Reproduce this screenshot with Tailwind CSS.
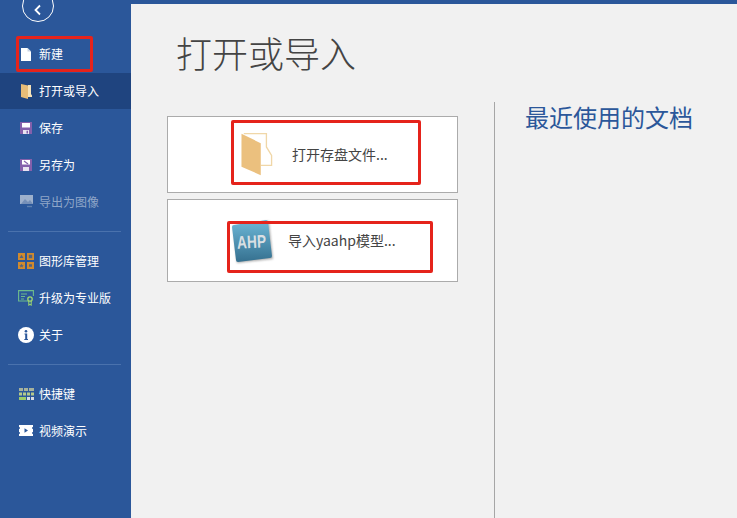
<!DOCTYPE html>
<html lang="zh">
<head>
<meta charset="utf-8">
<script src="https://cdn.jsdelivr.net/npm/@tailwindcss/browser@4"></script>
</head>
<body class="m-0 overflow-hidden">
<div class="relative flex h-[518px] w-[737px] overflow-hidden bg-[#2b579a] font-['Noto_Sans_CJK_SC','Liberation_Sans',sans-serif]">
  <!-- Sidebar -->
  <aside class="flex h-full w-[131px] shrink-0 flex-col text-[12px] text-white">
    <div class="-mt-[10px] ml-[22px] flex h-[32px] w-[32px] items-center justify-center rounded-full border border-white">
      <svg width="10" height="12" viewBox="0 0 10 12" class="mt-[8px]"><path d="M7 1.5 L2.5 6 L7 10.5" fill="none" stroke="white" stroke-width="1.8"/></svg>
    </div>
    <nav class="mt-[14px] flex flex-col">
      <div class="flex h-[37px] items-center gap-[5px] pl-[18px]">
        <span class="flex w-[16px] justify-center"><svg width="10" height="13" viewBox="0 0 10 13"><path d="M0 0H6.5L10 3.5V13H0Z" fill="#fff"/><path d="M6.5 0V3.5H10" fill="#c9d3e2"/></svg></span>
        <span class="-mt-[2px]">新建</span>
      </div>
      <div class="flex h-[36px] items-center gap-[5px] bg-[#1f447f] pl-[18px]">
        <span class="flex w-[16px] justify-center"><svg width="11" height="15" viewBox="0 0 11 15"><path d="M7 1H10V10L11 11.5V13H7Z" fill="#f6e2b8"/><path d="M0 0L7 1.5V15L0 13Z" fill="#e8bd78"/></svg></span>
        <span>打开或导入</span>
      </div>
      <div class="flex h-[37px] items-center gap-[5px] pl-[18px]">
        <span class="flex w-[16px] justify-center"><svg width="12" height="12" viewBox="0 0 12 12"><path d="M0 0H12V12H0Z" fill="#8460ab"/><path d="M2 1H10V5.5H2Z" fill="#fff"/><path d="M3 8H9V12H3Z" fill="#e8e3f0"/><path d="M6.5 8.7H8V11.5H6.5Z" fill="#8460ab"/></svg></span>
        <span>保存</span>
      </div>
      <div class="flex h-[37px] items-center gap-[5px] pl-[18px]">
        <span class="flex w-[16px] justify-center"><svg width="12" height="12" viewBox="0 0 12 12"><path d="M0 0H12V12H0Z" fill="#8460ab"/><path d="M2 1H10V5.5H2Z" fill="#fff"/><path d="M3 8H9V12H3Z" fill="#e8e3f0"/><path d="M4 2L8 5" stroke="#8460ab" stroke-width="1.2"/></svg></span>
        <span>另存为</span>
      </div>
      <div class="flex h-[37px] items-center gap-[5px] pl-[18px] text-[#8fa6c8]">
        <span class="flex w-[16px] justify-center"><svg width="13" height="13" viewBox="0 0 13 13"><path d="M0 0H13V9H0Z" fill="#9db0cc"/><path d="M1 9L5 4L8 7L10 5L13 9Z" fill="#7690b8"/><path d="M7 11.5H12" stroke="#5f80b0" stroke-width="1.4"/></svg></span>
        <span>导出为图像</span>
      </div>
    </nav>
    <div class="mx-[8px] mt-[11px] h-px w-[113px] bg-[#4a72ad]"></div>
    <nav class="mt-[10px] flex flex-col">
      <div class="flex h-[37px] items-center gap-[5px] pl-[18px]">
        <svg width="16" height="16" viewBox="0 0 16 16"><path d="M0 0H7V7H0ZM9 0H16V7H9ZM0 9H7V16H0ZM9 9H16V16H9Z" fill="#d08a2e"/><path d="M3.5 1.8L5.5 5H1.5ZM10.8 1.8H14.2V5.2H10.8ZM11 11.2H14V13.8H11Z" fill="#2b579a" opacity=".75"/><path d="M3.5 10.8L4.3 12.2H5.8L4.6 13.2L5 14.6L3.5 13.8L2 14.6L2.4 13.2L1.2 12.2H2.7Z" fill="#2b579a" opacity=".75"/></svg>
        <span>图形库管理</span>
      </div>
      <div class="flex h-[37px] items-center gap-[5px] pl-[18px]">
        <svg width="16" height="16" viewBox="0 0 16 16" fill="none"><path d="M10 11H.6V.6H15.4V6" stroke="#6dbb8c" stroke-width="1.1"/><path d="M3 4H9M3 6.5H7M3 9H6" stroke="#6dbb8c"/><circle cx="12" cy="9" r="2.2" stroke="#9fd86f" stroke-width="1.3"/><path d="M10.8 11V15.5L12 14L13.2 15.5V11" stroke="#9fd86f"/></svg>
        <span>升级为专业版</span>
      </div>
      <div class="flex h-[37px] items-center gap-[5px] pl-[18px]">
        <svg width="16" height="16" viewBox="0 0 16 16"><circle cx="8" cy="8" r="8" fill="#fff"/><circle cx="8" cy="4.2" r="1.3" fill="#2b579a"/><path d="M6.5 6.5H9.2V12H10V13H6.3V12H7.2V7.5H6.5Z" fill="#2b579a"/></svg>
        <span>关于</span>
      </div>
    </nav>
    <div class="mx-[8px] mt-[11px] h-px w-[113px] bg-[#4a72ad]"></div>
    <nav class="mt-[10px] flex flex-col">
      <div class="flex h-[37px] items-center gap-[5px] pl-[18px]">
        <span class="flex w-[16px] justify-center"><svg width="15" height="12" viewBox="0 0 15 12"><path d="M0 0H4V3H0ZM5 0H9V3H5ZM10 0H15V3H10Z" fill="#a7b29c"/><path d="M0 4.5H3V7.5H0ZM4 4.5H7V7.5H4ZM8 4.5H11V7.5H8ZM12 4.5H15V7.5H12Z" fill="#b4c98b"/><path d="M0 9H7V12H0Z" fill="#9ccb6a"/><path d="M8 9H11V12H8ZM12 9H15V12H12Z" fill="#d6dbe2"/></svg></span>
        <span>快捷键</span>
      </div>
      <div class="flex h-[37px] items-center gap-[5px] pl-[18px]">
        <span class="flex w-[16px] justify-center"><svg width="14" height="11" viewBox="0 0 14 11"><path d="M0 0H14V2L13 2.5V3.5L14 4V7L13 7.5V8.5L14 9V11H0V9L1 8.5V7.5L0 7V4L1 3.5V2.5L0 2Z" fill="#fff"/><path d="M5.5 3.2L9 5.5L5.5 7.8Z" fill="#2b579a"/></svg></span>
        <span>视频演示</span>
      </div>
    </nav>
  </aside>

  <!-- Main -->
  <main class="mt-[4px] flex min-w-0 flex-1 bg-[#f1f1f1]">
    <section class="w-[363px] shrink-0 pl-[36px]">
      <h1 class="ml-[9px] mt-[21px] text-[36px] leading-[54px] font-light text-[#444444]">打开或导入</h1>
      <div class="mt-[37px] flex w-[291px] flex-col gap-[6px]">
        <button class="flex h-[77px] items-center border border-[#ababab] bg-white pl-[73px] text-[14px] text-[#444]">
          <svg width="32" height="44" viewBox="0 0 34 45" class="mt-[-1px]"><path d="M3 0.8H27V15L32.5 24V34.5H21" fill="#fff" stroke="#f0d7a8" stroke-width="1.4"/><path d="M0.5 1L21 11V45L0.5 36Z" fill="#ebc07e"/></svg>
          <span class="ml-[19px]">打开存盘文件...</span>
        </button>
        <button class="flex h-[83px] items-center border border-[#ababab] bg-white pl-[64px] text-[14px] text-[#444]">
          <svg width="42" height="46" viewBox="0 0 42 46" class="overflow-visible"><defs><linearGradient id="a" x1="0" y1="0" x2="0" y2="1"><stop offset="0" stop-color="#6db8d8"/><stop offset="1" stop-color="#35708f"/></linearGradient><filter id="b" x="-10%" y="-10%" width="120%" height="120%"><feGaussianBlur stdDeviation="0.8"/></filter></defs><path d="M1 8L37 3L41 41L5 45Z" fill="#666" opacity=".55" filter="url(#b)"/><path d="M0 9Q0 7 2 7L34 2Q36 2 36 4L40 38Q40 40 38 40L6 44Q4 44 4 42Z" fill="url(#a)"/><text x="5" y="30" font-size="18" font-weight="700" font-family="Liberation Sans" fill="#d9dfe3" textLength="29" lengthAdjust="spacingAndGlyphs" transform="rotate(-3 20 24)">AHP</text></svg>
          <span class="ml-[14px]">导入yaahp模型...</span>
        </button>
      </div>
    </section>
    <section class="flex min-w-0 flex-1 flex-col">
      <div class="mt-[98px] flex-1 border-l border-[#a6a6a6] pl-[30px]">
        <h2 class="text-[24px] leading-[32px] font-normal text-[#2b579a] -mt-[1px]">最近使用的文档</h2>
      </div>
    </section>
  </main>

  <!-- Red annotation frames -->
  <div class="absolute left-[16px] top-[36px] h-[36px] w-[77px] rounded-[2px] border-[3px] border-[#e5231b]"></div>
  <div class="absolute left-[231px] top-[120px] h-[65px] w-[190px] rounded-[2px] border-[3px] border-[#e5231b]"></div>
  <div class="absolute left-[227px] top-[221px] h-[52px] w-[206px] rounded-[2px] border-[3px] border-[#e5231b]"></div>
</div>
</body>
</html>
